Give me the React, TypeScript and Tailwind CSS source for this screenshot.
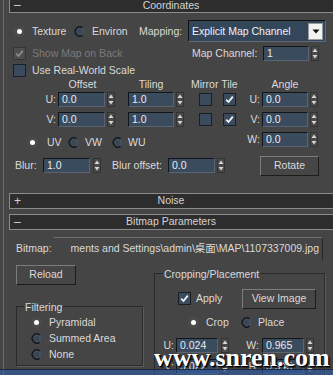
import clsx from "clsx";
import type { ReactNode } from "react";

function Spin() {
  return (
    <svg width="8" height="15" viewBox="0 0 8 15" className="shrink-0">
      <rect x="0.5" y="0.5" width="7" height="14" fill="#4a4a4a" stroke="#333" />
      <path d="M4 2.5 L6.5 6 L1.5 6 Z" fill="#d6d6d6" />
      <path d="M1.5 9 L6.5 9 L4 12.5 Z" fill="#d6d6d6" />
    </svg>
  );
}

function Field({ w, value }: { w: string; value: string }) {
  return (
    <div
      className={clsx(
        "h-[15px] shrink-0 bg-[#3a4b5e] border border-t-[#12161b] border-l-[#12161b] border-r-[#5a6571] border-b-[#5a6571] pl-[3px] leading-[13px] text-[#e8ecf0]",
        w
      )}
    >
      {value}
    </div>
  );
}

function SpinField({ w, value, gap }: { w: string; value: string; gap: string }) {
  return (
    <div className="flex items-center shrink-0">
      <Field w={w} value={value} />
      <div className={gap}>
        <Spin />
      </div>
    </div>
  );
}

function Check({ checked, disabled }: { checked?: boolean; disabled?: boolean }) {
  return (
    <div
      className={clsx(
        "w-[13px] h-[13px] shrink-0 border flex items-center justify-center",
        disabled ? "bg-[#4e4e4e] border-[#353535]" : "bg-[#3a4b5e] border-[#1a1f25]"
      )}
    >
      {checked && (
        <svg width="9" height="9" viewBox="0 0 9 9">
          <path
            d="M1.2 4.6 L3.5 7 L7.8 1.6"
            stroke={disabled ? "#8a8a8a" : "#f4f6f8"}
            strokeWidth="1.8"
            fill="none"
          />
        </svg>
      )}
    </div>
  );
}

function Radio({ on }: { on?: boolean }) {
  if (on)
    return (
      <div className="w-[11px] h-[11px] shrink-0 rounded-full bg-[#4b4b4b] flex items-center justify-center">
        <div className="w-[5px] h-[5px] rounded-full bg-white" />
      </div>
    );
  return (
    <svg width="11" height="11" viewBox="0 0 11 11" className="shrink-0">
      <circle cx="5.5" cy="5.5" r="5" fill="#43505e" />
      <path d="M8.6 1.8 A4.6 4.6 0 1 0 8.6 9.2" stroke="#151a20" strokeWidth="1.6" fill="none" />
      <circle cx="5.5" cy="5.5" r="2.6" fill="#3a4654" />
    </svg>
  );
}

function Btn({ cls, children }: { cls: string; children: ReactNode }) {
  return (
    <div
      className={clsx(
        "shrink-0 flex items-center justify-center bg-[#464646] border border-t-[#7c7c7c] border-l-[#7c7c7c] border-r-[#1c1c1c] border-b-[#1c1c1c] leading-none",
        cls
      )}
    >
      {children}
    </div>
  );
}

function Header({ sign, title, cls }: { sign: string; title: string; cls: string }) {
  return (
    <div
      className={clsx(
        "w-[330px] h-[16px] shrink-0 flex items-center bg-[#2d2d2d] border border-[#8c8c8c] text-[#d4d4d4] leading-none",
        cls
      )}
    >
      <div className="pl-[4px] w-[17px] text-[12px]">{sign}</div>
      <div className="w-[288px] text-center">{title}</div>
    </div>
  );
}

export default function App() {
  return (
    <div className="w-[333px] h-[375px] overflow-hidden relative bg-[#454545] text-[10.5px] text-[#dadada] flex font-['Liberation_Sans',Arial,sans-serif]">
      {/* left rail */}
      <div className="w-[9px] shrink-0 flex">
        <div className="ml-[3px] w-px h-full bg-[#6c6c6c]" />
      </div>

      <div className="w-[324px] shrink-0 flex flex-col leading-none">
        <Header sign="–" title="Coordinates" cls="-mt-[3px]" />

        {/* texture / mapping */}
        <div className="mt-[7px] h-[22px] flex items-center">
          <div className="ml-[5px]">
            <Radio on />
          </div>
          <div className="ml-[7px] w-[42px]">Texture</div>
          <Radio />
          <div className="ml-[7px] w-[47px]">Environ</div>
          <div className="w-[49px]">Mapping:</div>
          <div className="w-[138px] h-[22px] flex items-center bg-[#34465a] border border-t-[#111] border-l-[#111] border-r-[#5f6a76] border-b-[#5f6a76]">
            <div className="flex-1 pl-[3px] text-[#eef2f6]">Explicit Map Channel</div>
            <div className="w-[15px] h-[17px] mr-[2px] bg-[#f2f2f2] border border-[#9a9a9a] flex items-center justify-center">
              <svg width="8" height="5" viewBox="0 0 8 5">
                <path d="M0.5 0.5 L7.5 0.5 L4 4.5 Z" fill="#111" />
              </svg>
            </div>
          </div>
        </div>

        {/* show map on back / map channel */}
        <div className="mt-[4px] h-[15px] flex items-center">
          <div className="ml-[4px]">
            <Check checked disabled />
          </div>
          <div className="ml-[6px] w-[160px] text-[#7b7b7b]">Show Map on Back</div>
          <div className="w-[71px]">Map Channel:</div>
          <SpinField w="w-[46px]" value="1" gap="ml-[2px]" />
        </div>

        {/* real world */}
        <div className="mt-[3px] h-[14px] flex items-center">
          <div className="ml-[4px]">
            <Check />
          </div>
          <div className="ml-[6px]">Use Real-World Scale</div>
        </div>

        {/* column titles */}
        <div className="mt-[2px] h-[12px] flex items-center">
          <div className="ml-[49px] w-[49px] text-center">Offset</div>
          <div className="ml-[21px] w-[46px] text-center">Tiling</div>
          <div className="ml-[17px] w-[71px]">Mirror Tile</div>
          <div className="w-[46px] text-center">Angle</div>
        </div>

        {/* U */}
        <div className="mt-[2px] h-[15px] flex items-center">
          <div className="ml-[30px] w-[19px] text-right pr-[2px]">U:</div>
          <SpinField w="w-[47px]" value="0.0" gap="ml-[2px]" />
          <div className="ml-[13px]">
            <SpinField w="w-[46px]" value="1.0" gap="ml-[2px]" />
          </div>
          <div className="ml-[15px]">
            <Check />
          </div>
          <div className="ml-[11px]">
            <Check checked />
          </div>
          <div className="w-[26px] text-right pr-[2px]">U:</div>
          <SpinField w="w-[46px]" value="0.0" gap="ml-[2px]" />
        </div>

        {/* V */}
        <div className="mt-[5px] h-[15px] flex items-center">
          <div className="ml-[30px] w-[19px] text-right pr-[2px]">V:</div>
          <SpinField w="w-[47px]" value="0.0" gap="ml-[2px]" />
          <div className="ml-[13px]">
            <SpinField w="w-[46px]" value="1.0" gap="ml-[2px]" />
          </div>
          <div className="ml-[15px]">
            <Check />
          </div>
          <div className="ml-[11px]">
            <Check checked />
          </div>
          <div className="w-[26px] text-right pr-[2px]">V:</div>
          <SpinField w="w-[46px]" value="0.0" gap="ml-[2px]" />
        </div>

        {/* UV radios + W */}
        <div className="mt-[5px] h-[17px] flex items-start">
          <div className="w-[227px] shrink-0 mt-[5px] h-[12px] flex items-center">
            <div className="ml-[18px]">
              <Radio on />
            </div>
            <div className="ml-[9px] w-[21px]">UV</div>
            <Radio />
            <div className="ml-[6px] w-[27px]">VW</div>
            <Radio />
            <div className="ml-[5px]">WU</div>
          </div>
          <div className="h-[15px] flex items-center">
            <div className="w-[26px] text-right pr-[2px]">W:</div>
            <SpinField w="w-[46px]" value="0.0" gap="ml-[2px]" />
          </div>
        </div>

        {/* blur */}
        <div className="mt-[7px] h-[20px] flex items-center">
          <div className="ml-[6px] w-[28px]">Blur:</div>
          <SpinField w="w-[47px]" value="1.0" gap="ml-[3px]" />
          <div className="ml-[11px] w-[56px]">Blur offset:</div>
          <SpinField w="w-[47px]" value="0.0" gap="ml-[2px]" />
          <Btn cls="ml-[35px] w-[59px] h-[20px]">Rotate</Btn>
        </div>

        <div className="mt-[7px] h-px w-full bg-[#707070]" />

        <Header sign="+" title="Noise" cls="mt-[10px]" />
        <Header sign="–" title="Bitmap Parameters" cls="mt-[5px]" />

        {/* bitmap path */}
        <div className="mt-[7px] h-[24px] flex items-center">
          <div className="ml-[7px] w-[37px]">Bitmap:</div>
          <div className="w-[270px] h-[24px] flex items-center justify-end overflow-hidden whitespace-nowrap pr-[3px] border border-t-[#6e6e6e] border-l-[#454545] border-r-[#262626] border-b-[#454545] font-['Liberation_Sans','Noto_Sans_CJK_SC',sans-serif]">
            ments and Settings\admin\桌面\MAP\1107337009.jpg
          </div>
        </div>

        {/* lower area */}
        <div className="flex">
          <div className="ml-[7px] w-[127px] flex flex-col">
            <Btn cls="mt-[4px] w-[60px] h-[20px]">Reload</Btn>
            <fieldset className="mt-[16px] h-[65px] border border-[#2a2a2a] shadow-[1px_1px_0_#5c5c5c]">
              <legend className="ml-[7px] px-[1px] leading-[12px]">Filtering</legend>
              <div className="pt-[2px] flex flex-col">
                <div className="h-[16px] flex items-center">
                  <div className="ml-[14px]">
                    <Radio on />
                  </div>
                  <div className="ml-[7px]">Pyramidal</div>
                </div>
                <div className="h-[16px] flex items-center">
                  <div className="ml-[14px]">
                    <Radio />
                  </div>
                  <div className="ml-[7px]">Summed Area</div>
                </div>
                <div className="h-[16px] flex items-center">
                  <div className="ml-[14px]">
                    <Radio />
                  </div>
                  <div className="ml-[7px]">None</div>
                </div>
              </div>
            </fieldset>
          </div>

          <div className="ml-[11px] w-[171px] flex flex-col">
            <fieldset className="mt-[7px] h-[120px] border border-[#2a2a2a] shadow-[1px_1px_0_#5c5c5c]">
              <legend className="ml-[8px] px-[1px] leading-[12px]">Cropping/Placement</legend>
              <div className="mt-[9px] h-[20px] flex items-center">
                <div className="ml-[23px]">
                  <Check checked />
                </div>
                <div className="ml-[5px] w-[46px]">Apply</div>
                <Btn cls="w-[74px] h-[20px]">View Image</Btn>
              </div>
              <div className="mt-[7px] h-[14px] flex items-center">
                <div className="ml-[33px]">
                  <Radio on />
                </div>
                <div className="ml-[7px] w-[35px]">Crop</div>
                <Radio />
                <div className="ml-[6px]">Place</div>
              </div>
              <div className="mt-[8px] h-[15px] flex items-center">
                <div className="w-[21px] text-right pr-[2px]">U:</div>
                <SpinField w="w-[42px]" value="0.024" gap="ml-[3px]" />
                <div className="w-[33px] text-right pr-[3px]">W:</div>
                <SpinField w="w-[42px]" value="0.965" gap="ml-[2px]" />
              </div>
              <div className="mt-[6px] h-[15px] flex items-center">
                <div className="w-[21px] text-right pr-[2px]">V:</div>
                <SpinField w="w-[42px]" value="0.022" gap="ml-[3px]" />
                <div className="w-[33px] text-right pr-[3px]">H:</div>
                <SpinField w="w-[42px]" value="0.945" gap="ml-[2px]" />
              </div>
            </fieldset>
          </div>
        </div>
      </div>

      {/* watermark overlay */}
      <div className="absolute left-0 bottom-0 w-full h-[6px] bg-[#2f5da8]/60 border-t border-[#1b2a40]" />
      <div className="absolute left-[154px] top-[345px] text-[26px] leading-none font-bold text-white font-['Liberation_Serif',serif] whitespace-nowrap [text-shadow:1px_1px_0_#000,2px_2px_1px_#222,-1px_0_0_#333]">
        www.snren.com
      </div>
    </div>
  );
}
